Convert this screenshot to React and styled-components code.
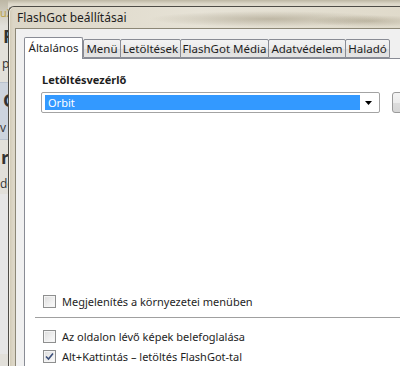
import React from "react";
import styled, { createGlobalStyle } from "styled-components";

const GlobalStyle = createGlobalStyle`
  html, body { margin: 0; padding: 0; overflow: hidden; }
  body { font-family: "Noto Sans", "Open Sans", sans-serif; }
`;

const Desktop = styled.div`
  width: 400px;
  height: 366px;
  overflow: hidden;
  display: flex;
  background: linear-gradient(180deg, #bdb7a4 0px, #ddd8c9 4px, #e2ded2 8px);
  font-family: "Noto Sans", "Open Sans", sans-serif;
`;

const BgWindow = styled.div`
  width: 8px;
  flex-shrink: 0;
  overflow: hidden;
  display: flex;
  flex-direction: column;
  background: #e2e0da;
  color: #2a2a2a;
  white-space: nowrap;
`;

const BgLine = styled.div`
  font-family: "Open Sans", sans-serif;
  font-size: ${(p) => p.$size || 12}px;
  font-weight: ${(p) => (p.$bold ? 700 : 400)};
  line-height: ${(p) => p.$lh}px;
  height: ${(p) => p.$lh}px;
  margin-left: ${(p) => p.$indent || 0}px;
  color: ${(p) => p.$color || "#333"};
  background: ${(p) => p.$bg || "transparent"};
`;

const BgHighlight = styled.div`
  display: flex;
  flex-direction: column;
  background: #cdd4de;
  border-top: 1px solid #b9c2cf;
  border-bottom: 1px solid #b9c2cf;
`;

const Dialog = styled.div`
  width: 470px;
  flex-shrink: 0;
  margin-top: 6px;
  border: 1px solid #4e4c46;
  border-right: none;
  border-bottom: none;
  border-radius: 6px 0 0 0;
  padding-left: 6px;
  display: flex;
  flex-direction: column;
  background:
    radial-gradient(ellipse 120px 8px at 260px 12px, rgba(120, 108, 80, 0.35), transparent),
    radial-gradient(ellipse 60px 6px at 360px 14px, rgba(120, 108, 80, 0.3), transparent),
    linear-gradient(90deg, #cfc8b3 0px, #dcd6c6 4px, #e6e2d6 40%, #ddd7c6 100%);
  box-shadow: inset 1px 0 0 #f2efe6;
`;

const TitleBar = styled.div`
  height: 26px;
  display: flex;
  align-items: center;
  padding-left: 2px;
  font-size: 12px;
  color: #1e1e1e;
`;

const Client = styled.div`
  flex: 1;
  background: #f0f0f0;
  border: 1px solid #8c8776;
  border-right: none;
  border-bottom: none;
  padding: 8px 0 0 8px;
  display: flex;
  flex-direction: column;
`;

const TabStrip = styled.div`
  display: flex;
  align-items: flex-end;
  height: 21px;
  position: relative;
  z-index: 1;
`;

const Tab = styled.div`
  box-sizing: border-box;
  flex-shrink: 0;
  width: ${(p) => p.$w}px;
  height: ${(p) => (p.$active ? 22 : 19)}px;
  margin-bottom: ${(p) => (p.$active ? -1 : 0)}px;
  margin-right: ${(p) => (p.$active ? 0 : -1)}px;
  border: 1px solid #898c95;
  border-bottom: ${(p) => (p.$active ? "none" : "1px solid #898c95")};
  border-radius: 2px 2px 0 0;
  background: ${(p) =>
    p.$active ? "#ffffff" : "linear-gradient(180deg, #f3f3f3 0%, #ebebeb 50%, #dddddd 51%, #e4e4e4 100%)"};
  font-size: 11.5px;
  color: #1e1e1e;
  display: flex;
  align-items: center;
  justify-content: center;
  padding-bottom: ${(p) => (p.$active ? 2 : 0)}px;
  white-space: nowrap;
`;

const Panel = styled.div`
  flex: 1;
  background: #ffffff;
  border: 1px solid #898c95;
  border-right: none;
  border-bottom: none;
  padding: 13px 0 0 16px;
  display: flex;
  flex-direction: column;
`;

const GroupLabel = styled.div`
  font-size: 11px;
  font-weight: 700;
  line-height: 16px;
  color: #1e1e1e;
  padding-left: 1px;
`;

const SelectRow = styled.div`
  display: flex;
  gap: 12px;
  margin-top: 4px;
  height: 21px;
`;

const Select = styled.div`
  box-sizing: border-box;
  flex-shrink: 0;
  width: 339px;
  height: 21px;
  border: 1px solid #a3a3a3;
  border-radius: 2px;
  background: #ffffff;
  display: flex;
  align-items: center;
  padding: 2px;
`;

const SelectValue = styled.div`
  flex: 1;
  height: 15px;
  margin-left: 1px;
  background: #3399ff;
  color: #ffffff;
  font-size: 11px;
  line-height: 15px;
  padding-left: 3px;
`;

const DropArrow = styled.div`
  width: 17px;
  display: flex;
  justify-content: center;
  align-items: center;
`;

const SideButton = styled.div`
  box-sizing: border-box;
  flex-shrink: 0;
  width: 80px;
  height: 21px;
  border: 1px solid #9a9a9a;
  border-radius: 3px;
  background: linear-gradient(180deg, #f4f4f4 0%, #ececec 50%, #dddddd 51%, #d6d6d6 100%);
`;

const Options = styled.div`
  margin-top: 178px;
  display: flex;
  flex-direction: column;
`;

const OptionRow = styled.label`
  display: flex;
  align-items: center;
  height: 20px;
  font-size: 11px;
  color: #1e1e1e;
  white-space: nowrap;
`;

const Box = styled.span`
  box-sizing: border-box;
  width: 13px;
  height: 13px;
  margin: 0 6px 0 2px;
  border: 1px solid #8e8f8f;
  background: linear-gradient(135deg, #dcdcdc 0%, #f0f0f0 60%, #fbfbfb 100%);
  box-shadow: inset 0 0 0 1px #f4f4f4;
  display: flex;
  align-items: center;
  justify-content: center;
`;

const Separator = styled.div`
  height: 1px;
  margin: 6px 0 7px -6px;
  background: #a0a0a0;
  border-bottom: 1px solid #ffffff;
`;

const CheckBox = ({ checked }) => (
  <Box>
    {checked && (
      <svg width="9" height="9" viewBox="0 0 9 9">
        <path d="M1 4.5 L3.5 7 L8 1.5" fill="none" stroke="#3b4f7a" strokeWidth="1.6" />
      </svg>
    )}
  </Box>
);

const tabs = [
  { label: "Általános", w: 59, active: true },
  { label: "Menü", w: 38 },
  { label: "Letöltések", w: 61 },
  { label: "FlashGot Média", w: 89 },
  { label: "Adatvédelem", w: 78 },
  { label: "Haladó", w: 45 },
];

export default function App() {
  return (
    <>
      <GlobalStyle />
      <Desktop>
        <BgWindow>
          <BgLine $lh={26} $size={11} $color="#b8a040" $bg="linear-gradient(180deg,#bdb7a4,#e2e0da)">uX</BgLine>
          <BgLine $lh={20} $size={18} $bold $indent={3}>F</BgLine>
          <BgLine $lh={36} $size={12} $indent={2}>p</BgLine>
          <BgHighlight>
            <BgLine $lh={34} $size={18} $bold $indent={3}>G</BgLine>
            <BgLine $lh={22} $size={12} $indent={0}>v</BgLine>
          </BgHighlight>
          <BgLine $lh={34} $size={18} $bold $indent={1}>r</BgLine>
          <BgLine $lh={20} $size={12} $indent={0}>de</BgLine>
          <BgLine $lh={160} $size={12} $bg="#e6e6e6"> </BgLine>
        </BgWindow>
        <Dialog>
          <TitleBar>FlashGot beállításai</TitleBar>
          <Client>
            <TabStrip>
              {tabs.map((t) => (
                <Tab key={t.label} $w={t.w} $active={t.active}>
                  {t.label}
                </Tab>
              ))}
            </TabStrip>
            <Panel>
              <GroupLabel>Letöltésvezérlő</GroupLabel>
              <SelectRow>
                <Select>
                  <SelectValue>Orbit</SelectValue>
                  <DropArrow>
                    <svg width="7" height="4" viewBox="0 0 7 4">
                      <path d="M0 0 L7 0 L3.5 4 Z" fill="#000" />
                    </svg>
                  </DropArrow>
                </Select>
                <SideButton />
              </SelectRow>
              <Options>
                <OptionRow>
                  <CheckBox />
                  Megjelenítés a környezetei menüben
                </OptionRow>
                <Separator />
                <OptionRow>
                  <CheckBox />
                  Az oldalon lévő képek belefoglalása
                </OptionRow>
                <OptionRow>
                  <CheckBox checked />
                  Alt+Kattintás – letöltés FlashGot-tal
                </OptionRow>
              </Options>
            </Panel>
          </Client>
        </Dialog>
      </Desktop>
    </>
  );
}
